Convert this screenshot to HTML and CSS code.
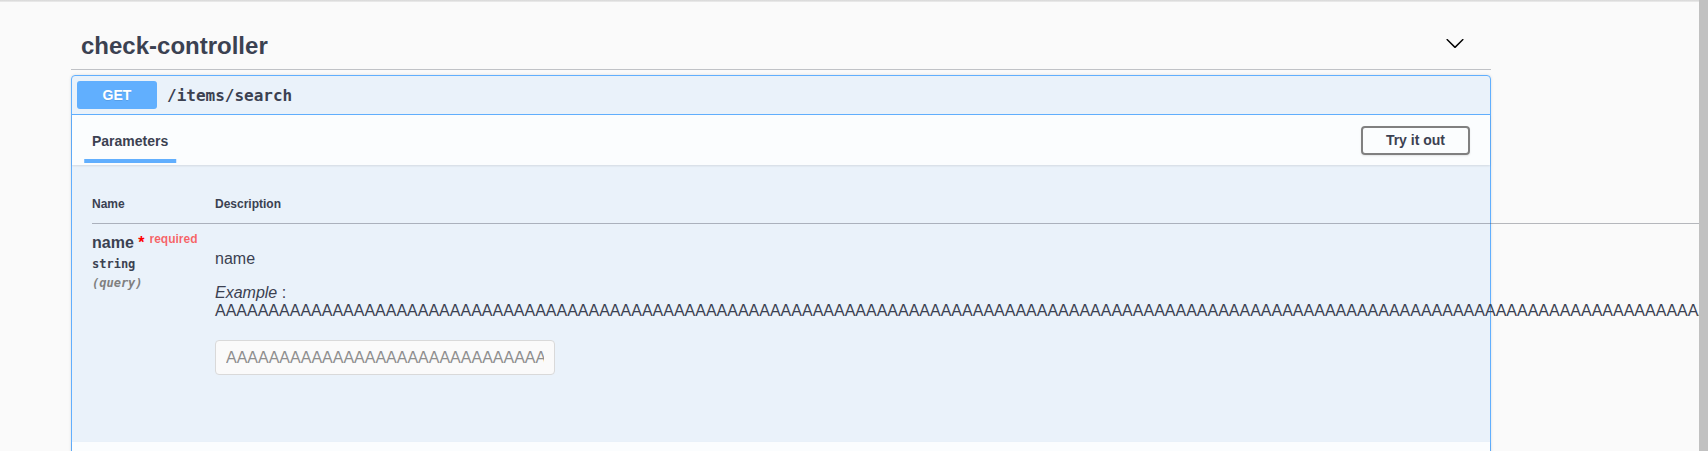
FILE: index.html
```html
<!DOCTYPE html>
<html lang="en">
<head>
<meta charset="utf-8">
<title>Swagger UI</title>
<link rel="stylesheet" href="styles.css">
</head>
<body>
<div class="viewport">
  <div class="page">
    <div class="top-shade"></div>
    <div class="wrapper">
      <section class="tag-section">
        <h3 class="opblock-tag">
          <span class="tag-name">check-controller</span>
          <button class="expand" type="button" aria-label="Collapse operation">
            <svg width="20" height="20" viewBox="0 0 20 20" aria-hidden="true"><path d="M17.418 6.109c.272-.268.709-.268.979 0s.271.701 0 .969l-7.908 7.83c-.27.268-.707.268-.979 0l-7.908-7.830c-.27-.268-.27-.701 0-.969.271-.268.709-.268.979 0L10 13.25l7.418-7.141z"/></svg>
          </button>
        </h3>
        <div class="opblock">
          <div class="summary">
            <span class="method">GET</span>
            <span class="path">/items/search</span>
          </div>
          <div class="section-header">
            <div class="tab"><span class="tab-label">Parameters</span></div>
            <button class="btn-try" type="button">Try it out</button>
          </div>
          <div class="table-container">
            <table class="parameters">
              <thead>
                <tr><th class="col-name">Name</th><th class="col-desc">Description</th></tr>
              </thead>
              <tbody>
                <tr>
                  <td class="col-name">
                    <div class="param-name">name<span class="star">&nbsp;*</span><span class="req">required</span></div>
                    <div class="param-type">string</div>
                    <div class="param-in">(query)</div>
                  </td>
                  <td class="col-desc">
                    <p class="desc">name</p>
                    <div class="example"><i>Example</i> : <span>AAAAAAAAAAAAAAAAAAAAAAAAAAAAAAAAAAAAAAAAAAAAAAAAAAAAAAAAAAAAAAAAAAAAAAAAAAAAAAAAAAAAAAAAAAAAAAAAAAAAAAAAAAAAAAAAAAAAAAAAAAAAAAAAAAAAAAAAAAAAA</span></div>
                    <input class="param-input" type="text" placeholder="AAAAAAAAAAAAAAAAAAAAAAAAAAAAAAAAAAAAAAAAAAAAAAAAAAAAAAAAAAAAAAAAAAAAAAAAAAAAAAAAAAAAAAAAAAAAAAAAAAAAAAAAAAAAAAAAAAAAAAAAAAAAAAAAAAAAAAAAAAAAA">
                  </td>
                </tr>
              </tbody>
            </table>
          </div>
          <div class="section-header responses-header"></div>
        </div>
      </section>
    </div>
  </div>
  <div class="scrollbar"></div>
</div>
</body>
</html>
```

FILE: styles.css
```css
* { box-sizing: border-box; }

html, body {
  margin: 0;
  padding: 0;
  height: 451px;
  overflow: hidden;
  background: #fafafa;
}

body {
  font-family: "Liberation Sans", Arial, sans-serif;
  color: #3b4151;
}

.viewport {
  display: flex;
  height: 451px;
}

.page {
  width: 1699px;
  flex: none;
  overflow: visible;
}

.scrollbar {
  width: 9px;
  flex: none;
  background: #c1c1c1;
}

.top-shade {
  height: 2px;
  background: linear-gradient(to bottom, #d6d6d6, #ededed);
}

.wrapper {
  padding: 20px 0 0 71px;
}

.tag-section {
  width: 1420px;
}

.opblock-tag {
  display: flex;
  align-items: center;
  margin: 0 0 5px;
  padding: 10px 20px 10px 10px;
  border-bottom: 1px solid rgba(59, 65, 81, 0.3);
  font-size: 24px;
  font-weight: 700;
  line-height: 27px;
  color: #3b4151;
}

.tag-name {
  flex: 1;
}

.expand {
  display: flex;
  align-self: center;
  margin: 0 0 5px;
  padding: 0 6px 0 10px;
  border: none;
  background: none;
  cursor: pointer;
}

.expand svg {
  display: block;
  fill: #000;
}

.opblock {
  border: 1px solid #61affe;
  border-radius: 4px;
  background: rgba(97, 175, 254, 0.1);
  box-shadow: 0 0 3px rgba(0, 0, 0, 0.12);
}

.summary {
  display: flex;
  align-items: center;
  padding: 5px;
  border-bottom: 1px solid #61affe;
}

.method {
  width: 80px;
  padding: 6px 0;
  border-radius: 3px;
  background: #61affe;
  color: #fff;
  font-size: 14px;
  font-weight: 700;
  line-height: 16px;
  text-align: center;
  text-shadow: 0 1px 0 rgba(0, 0, 0, 0.1);
}

.path {
  padding: 0 10px;
  font-family: "DejaVu Sans Mono", monospace;
  font-size: 16px;
  font-weight: 700;
  color: #3b4151;
}

.section-header {
  display: flex;
  align-items: center;
  min-height: 50px;
  padding: 8px 20px;
  background: rgba(255, 255, 255, 0.8);
  box-shadow: 0 1px 2px rgba(0, 0, 0, 0.1);
}

.tab {
  flex: 1;
  padding-top: 2px;
  font-size: 14px;
  font-weight: 700;
  color: #3b4151;
}

.tab-label {
  position: relative;
}

.tab-label::after {
  content: "";
  position: absolute;
  left: 50%;
  bottom: -14px;
  width: 120%;
  height: 4px;
  transform: translateX(-50%);
  background: #61affe;
}

.btn-try {
  padding: 5px 23px;
  border: 2px solid #808080;
  border-radius: 4px;
  background: transparent;
  box-shadow: 0 1px 2px rgba(0, 0, 0, 0.1);
  font-family: "Liberation Sans", Arial, sans-serif;
  font-size: 14px;
  font-weight: 700;
  line-height: 15px;
  color: #3b4151;
  cursor: pointer;
}

.table-container {
  padding: 20px 20px 52px;
}

.parameters {
  border-collapse: collapse;
  border-spacing: 0;
}

.parameters th {
  padding: 12px 0;
  border-bottom: 1px solid rgba(59, 65, 81, 0.2);
  font-size: 12px;
  font-weight: 700;
  text-align: left;
  color: #3b4151;
}

.parameters td {
  padding: 10px 0;
  vertical-align: top;
}

.param-name {
  min-width: 123px;
  font-size: 16px;
  font-weight: 700;
  color: #3b4151;
}

.star {
  color: red;
}

.req {
  padding-left: 5px;
  font-size: 12px;
  line-height: 0;
  vertical-align: 5px;
  color: rgba(255, 0, 0, 0.6);
}

.param-type {
  padding: 5px 0;
  font-family: "DejaVu Sans Mono", monospace;
  font-size: 12px;
  font-weight: 700;
  color: #3b4151;
}

.param-in {
  font-family: "DejaVu Sans Mono", monospace;
  font-size: 12px;
  font-weight: 700;
  font-style: italic;
  color: #808080;
}

.desc {
  margin: 16px 0;
  font-size: 16px;
  color: #3b4151;
}

.example {
  margin: 0;
  font-size: 16px;
  color: #3b4151;
}

.param-input {
  display: block;
  width: 340px;
  height: 35px;
  margin: 20px 0 5px;
  padding: 8px 10px;
  border: 1px solid #d9d9d9;
  border-radius: 4px;
  background: #fafafa;
  font-family: "Liberation Sans", Arial, sans-serif;
  font-size: 16px;
  color: #3b4151;
  outline: none;
}

.param-input::placeholder {
  color: #8e8e8e;
  opacity: 1;
}

.responses-header {
  height: 50px;
}
```
